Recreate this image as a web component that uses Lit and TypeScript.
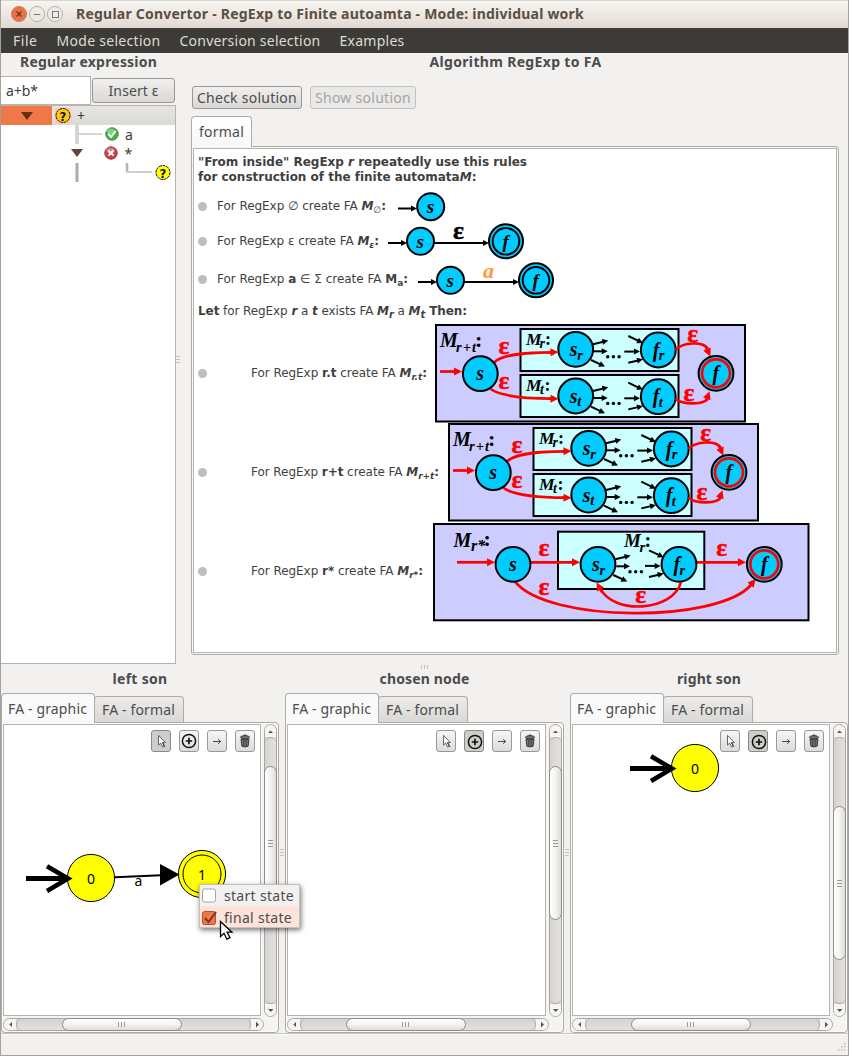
import { LitElement, html, svg, css } from "lit";
import { customElement, property } from "lit/decorators.js";

/** Text label that tracks its letters out or in to occupy a given width. */
@customElement("ui-label")
class UiLabel extends LitElement {
  @property({ type: Number }) w = 0;
  static styles = css`
    :host { display: inline-block; white-space: nowrap; }
  `;
  firstUpdated() {
    if (!this.w) return;
    const range = document.createRange();
    range.selectNodeContents(this);
    const natural = range.getBoundingClientRect().width;
    const count = (this.textContent || "").replace(/\s+/g, " ").trim().length;
    if (count > 1) this.style.letterSpacing = `${(this.w - natural) / count}px`;
  }
  render() {
    return html`<slot></slot>`;
  }
}

const RED = "#ff0000";
const BLUE = "#00ccff";

function arrow(x1: number, y1: number, x2: number, y2: number, color = "#000", width = 2, head = 6) {
  const len = Math.hypot(x2 - x1, y2 - y1);
  const ux = (x2 - x1) / len;
  const uy = (y2 - y1) / len;
  const bx = x2 - ux * head;
  const by = y2 - uy * head;
  const h = head * 0.5;
  return svg`<line x1=${x1} y1=${y1} x2=${bx + ux} y2=${by + uy} stroke=${color} stroke-width=${width} />
    <polygon points="${x2},${y2} ${bx - uy * h},${by + ux * h} ${bx + uy * h},${by - ux * h}" fill=${color} />`;
}

function node(x: number, y: number, r: number, label: string, sub = "", size = 20) {
  const dx = label === "f" ? 1 : 0;
  return svg`<circle cx=${x} cy=${y} r=${r} fill=${BLUE} stroke="#000" stroke-width="2" />
    <text class="m" x=${sub ? x - 6 + dx * 0.5 : x - 4 + dx * 0.6} y=${y + 6.7} font-size=${size}>${label}</text>
    ${sub ? svg`<text class="m" x=${x + 1.5 - dx} y=${y + 10.4} font-size="14.5">${sub}</text>` : ""}`;
}

const eps = (x: number, y: number, color = RED) =>
  svg`<text class="e" x=${x} y=${y + 6} font-size="25.5" fill=${color} stroke=${color} stroke-width="0.5">ε</text>`;

function dots(x: number, y: number) {
  return [0, 5.7, 11.4].map((d) => svg`<circle cx=${x + d} cy=${y} r="1.7" />`);
}

/** Inner machine: two states joined through an unspecified body. */
function machine(sx: number, sy: number, fx: number, fy: number, sub: string) {
  return svg`${node(sx, sy, 17.4, "s", sub)}${node(fx, fy, 17.4, "f", sub)}
    ${arrow(sx + 17.3, sy - 5, sx + 32.6, sy - 8.8)}
    ${arrow(sx + 18.3, sy + 2, sx + 32, sy + 2)}
    ${arrow(sx + 15.3, sy + 10.7, sx + 29.3, sy + 17.3)}
    ${arrow(fx - 30, fy - 14, fx - 15.3, fy - 7)}
    ${arrow(fx - 34, fy + 1.6, fx - 18.3, fy + 1.6)}
    ${arrow(fx - 30, fy + 12.7, fx - 15.3, fy + 9.3)}
    ${dots(sx + 32, sy + 7.4)}`;
}

const emptyFa = () => svg`
  ${arrow(1, 18.5, 20, 18.5)}
  ${node(33.7, 16.7, 13.5, "s", "", 19)}`;

const stepFa = (label: unknown) => svg`
  ${arrow(1, 21, 20, 21)}
  ${node(33.5, 19.3, 13.5, "s", "", 19)}
  ${arrow(47, 21, 102, 21)}
  <circle cx="119" cy="19.3" r="17" fill=${BLUE} stroke="#000" stroke-width="2" />
  ${node(119, 19.3, 13.3, "f", "", 19)}
  ${label}`;

const finalNode = (x: number, y: number) => svg`
  ${node(x, y, 17.4, "f")}
  <circle cx=${x} cy=${y} r="14" fill="none" stroke=${RED} stroke-width="2.7" />`;

const parallelFa = () => svg`
  <rect x="1" y="1" width="309" height="96.5" fill="#ccccff" stroke="#000" stroke-width="2" />
  <rect x="85.5" y="5" width="158" height="42" fill="#ccffff" stroke="#000" stroke-width="2" />
  <rect x="85.5" y="51" width="158" height="42" fill="#ccffff" stroke="#000" stroke-width="2" />
  <text class="t" x="5" y="23.3" font-size="20">M</text>
  <text class="t" x="21" y="28" font-size="14.5" textLength="20">r+t</text>
  <text class="t n" x="40" y="23.3" font-size="22">:</text>
  <text class="t" x="91" y="20.5" font-size="17.5">M</text>
  <text class="t" x="104.500" y="24" font-size="14">r</text>
  <text class="t n" x="110" y="20.5" font-size="18">:</text>
  <text class="t" x="91" y="66.5" font-size="17.5">M</text>
  <text class="t" x="105" y="70" font-size="14">t</text>
  <text class="t n" x="109.500" y="66.5" font-size="18">:</text>
  ${machine(140.7, 25.3, 223.3, 26, "r")}
  ${machine(140.7, 72, 223.3, 72.7, "t")}
  ${arrow(5, 47.5, 27, 47.5, RED, 2.7, 8)}
  <path class="r" d="M59 38.5 C68 29.5 95 28.5 117 28.3" />
  ${arrow(114, 28.4, 123.5, 28, RED, 2.7, 8)}
  <path class="r" d="M55.7 65 C66 72.5 95 74.5 117 74.7" />
  ${arrow(114, 74.6, 123.5, 74.8, RED, 2.7, 8)}
  <path class="r" d="M240.3 26 C248 18 268 17 273 25" />
  ${arrow(271, 23, 275.3, 32.5, RED, 2.7, 8)}
  <path class="r" d="M240.3 74.7 C248 81 270 81 273 74" />
  ${arrow(271, 77, 274.5, 67.3, RED, 2.7, 8)}
  ${node(45.3, 49.7, 17.4, "s")}${finalNode(281, 49.3)}
  ${eps(69, 24)}${eps(69, 59.3)}${eps(257.7, 12.3)}${eps(254, 70.7)}`;

const starFa = () => svg`
  <rect x="1" y="2" width="374.5" height="96.3" fill="#ccccff" stroke="#000" stroke-width="2" />
  <rect x="125" y="9.7" width="146.3" height="57.3" fill="#ccffff" stroke="#000" stroke-width="2" />
  <text class="t" x="20.5" y="24.7" font-size="20">M</text>
  <text class="t" x="38" y="29" font-size="16">r*</text>
  <text class="t n" x="50.5" y="24.3" font-size="22">:</text>
  <text class="t" x="191" y="25" font-size="19">M</text>
  <text class="t" x="206.5" y="29.5" font-size="15">r</text>
  <text class="t n" x="211.5" y="25" font-size="20">:</text>
  ${machine(165, 42.3, 246, 42.3, "r")}
  ${arrow(24, 40.3, 62, 40.3, RED, 2.7, 8)}
  ${arrow(98, 40.3, 147, 40.3, RED, 2.7, 8)}
  ${arrow(264, 40.3, 313, 40.3, RED, 2.7, 8)}
  <path class="r" d="M248 60 C240 90 180 93 167 66" />
  ${arrow(169, 70, 163.5, 60.5, RED, 2.7, 8)}
  <path class="r" d="M82 59.7 C115 101 285 101 318 63" />
  ${arrow(316, 65, 322.7, 57, RED, 2.7, 8)}
  ${node(80, 42.3, 17.4, "s")}${finalNode(331.3, 42.3)}
  ${eps(111, 28.3)}${eps(288.7, 28.3)}${eps(111, 67)}${eps(207.7, 75.3)}`;

const pointerIcon = () => html`<svg width="18" height="20" viewBox="0 0 18 20">
  <path d="M6.5 4.3v9.8l2.2-2 1.9 4 1.6-.8-1.9-3.8h3z" fill="#fff" stroke="#555" stroke-width="0.9" />
  <path d="M10.7 11.8l2.2 4" stroke="#333" stroke-width="1" fill="none" /></svg>`;
const addIcon = (d: number) => html`<svg width="18" height="20" viewBox="0 0 18 20">
  <circle cx=${9 + d} cy=${10 + d} r="6.6" fill="none" stroke="#111" stroke-width="1.5" />
  <path d=${`M${5.8 + d} ${10 + d}h6.4M${9 + d} ${6.8 + d}v6.4`} stroke="#111" stroke-width="1.7" /></svg>`;
const edgeIcon = () => html`<svg width="18" height="20" viewBox="0 0 18 20">
  <path d="M5 10.5h7.5M10.2 8.2l2.4 2.3-2.4 2.3" fill="none" stroke="#333" stroke-width="0.9" /></svg>`;
const trashIcon = () => html`<svg width="18" height="20" viewBox="0 0 18 20">
  <ellipse cx="9" cy="6.3" rx="4.6" ry="1.6" fill="#777" stroke="#333" stroke-width="1" />
  <path d="M5 8.2l.9 7q3 1.6 6.2 0l.9-7q-4 1.4-8 0z" fill="#8a8a8a" stroke="#333" stroke-width="1" />
  <path d="M7.3 9v6M9 9.2v6.2M10.8 9v6M7.5 4.4q1.5-1 3 0" fill="none" stroke="#333" stroke-width=".9" /></svg>`;

const questionIcon = (fill: string) => html`<svg width="16" height="16" viewBox="0 0 16 16">
  <circle cx="8" cy="7.5" r="7" fill=${fill} stroke="#111" stroke-width="1" stroke-dasharray="3 .6" />
  <text class="q" x="8" y="12.500" text-anchor="middle">?</text></svg>`;

/** Notebook with a drawing canvas, toolbar and two scrollbars. */
@customElement("fa-pane")
class FaPane extends LitElement {
  @property() heading = "";
  @property({ type: Number }) headingWidth = 0;
  @property() tool = "add";
  @property() graph = "";
  @property({ type: Number }) thumb = 28;

  static styles = css`
    :host { display: flex; flex-direction: column; width: 278px; flex: none; font-size: 14px; color: #4c4c4c; }
    .heading { height: 22px; font-weight: bold; text-align: center; line-height: 17px; }
    .tabs { display: flex; align-items: flex-end; height: 30px; }
    .tab { box-sizing: border-box; border: 1px solid #aeaba7; border-bottom: 0; border-radius: 4px 4px 0 0;
      padding-left: 7px; line-height: 26px; height: 26px; width: 90px; margin-left: -1px;
      background: linear-gradient(#edecea, #dad8d6); }
    .tab.on { height: 30px; width: 94px; line-height: 29px; margin: 0 0 -1px; background: #fafafa; position: relative; padding-left: 6px; }
    .box { box-sizing: border-box; height: 311px; border: 1px solid #aeaba7; border-radius: 0 4px 4px 4px;
      background: #f5f4f3; padding: 1px; display: grid; grid-template-columns: 1fr 13px;
      grid-template-rows: 294px 13px; box-shadow: inset 0 0 0 1px #fbfbfa; }
    .canvas { box-sizing: border-box; margin-right: 3px; height: 292px; border: 1px solid #b7b4af; background: #fff;
      display: grid; grid-template-columns: 100%; overflow: hidden; }
    .canvas > * { grid-area: 1 / 1; }
    .tools { display: flex; gap: 8px; justify-self: end; padding: 5px 5px 0 0; height: 22px; }
    .tool { box-sizing: border-box; width: 20px; height: 22px; border: 1px solid #999; border-radius: 3px;
      background: linear-gradient(#f6f6f5, #dcdbda); display: flex; }
    .tool.on { background: #cfcdcb; border-color: #8c8985; }
    .graph { font-family: "Noto Sans", sans-serif; font-size: 14px; fill: #000; display: block; }
    .v, .h { box-sizing: border-box; border: 1px solid #aaa6a2; border-radius: 7px; display: flex; }
    .v { width: 13px; height: 293px; flex-direction: column; background: linear-gradient(90deg, #d6d4d2, #e3e1df); }
    .h { height: 13px; background: linear-gradient(#d6d4d2, #e3e1df); }
    .end { background: #f6f5f4; display: flex; align-items: center; justify-content: center; flex: none; color: #555; }
    .v .end { height: 12px; width: 11px; }
    .h .end { width: 12px; height: 11px; }
    .v .end:first-child { border-radius: 6px 6px 0 0; }
    .v .end:last-child { border-radius: 0 0 6px 6px; }
    .h .end:first-child { border-radius: 6px 0 0 6px; }
    .h .end:last-child { border-radius: 0 6px 6px 0; }
    .track { flex: 1; display: flex; box-sizing: border-box; }
    .v .track { flex-direction: column; border: solid #aaa6a2; border-width: 1px 0; border-radius: 6px; }
    .h .track { border: solid #aaa6a2; border-width: 0 1px; border-radius: 6px; }
    .thumb { box-sizing: border-box; border: 1px solid #8f8b87; border-radius: 7px; display: flex; flex: none;
      align-items: center; justify-content: center; }
    .v .thumb { width: 13px; height: 154px; margin-left: -1px; background: linear-gradient(90deg, #fff, #f4f3f2 50%, #dedcda); }
    .h .thumb { width: 120px; height: 13px; margin: -1px 0 0 45px; background: linear-gradient(#fff, #f4f3f2 50%, #dedcda); }
  `;

  private state(x: number, y: number, label: string, final = false) {
    return svg`<circle cx=${x} cy=${y} r="23.6" fill="#ffff00" stroke="#000" stroke-width="1" />
      ${final ? svg`<circle cx=${x} cy=${y} r="19" fill="none" stroke="#000" stroke-width="1" />` : ""}
      <text x=${x} y=${y + 6} text-anchor="middle">${label}</text>`;
  }
  private start(x: number, y: number) {
    return svg`<path d="M${x - 65} ${y}h42" stroke="#000" stroke-width="5" />
      <path d="M${x - 44} ${y - 12.3}L${x - 23} ${y}L${x - 44} ${y + 12.3}" stroke="#000" stroke-width="4.6" fill="none" />`;
  }
  private drawing() {
    if (this.graph === "edge")
      return svg`${this.state(87, 153, "0")}${this.state(198, 149, "1", true)}
        ${this.start(87, 153.6)}
        <path d="M111 152.3L157 150.3" stroke="#000" stroke-width="2" />
        <polygon points="156,139 175.5,149.6 156,160.6" />
        <text x="134.5" y="161.3" text-anchor="middle">a</text>`;
    if (this.graph === "single") return svg`${this.state(122, 43, "0")}${this.start(122, 43.6)}`;
    return "";
  }
  private end(d: string) {
    return html`<div class="end"><svg width="7" height="7" viewBox="0 0 7 7"><path d=${d} fill="currentColor" /></svg></div>`;
  }
  render() {
    const on = (t: string) => (this.tool === t ? "tool on" : "tool");
    return html`
      <div class="heading"><ui-label w=${this.headingWidth}>${this.heading}</ui-label></div>
      <div class="tabs">
        <div class="tab on"><ui-label w="79">FA - graphic</ui-label></div>
        <div class="tab"><ui-label w="73">FA - formal</ui-label></div>
      </div>
      <div class="box">
        <div class="canvas">
          <svg class="graph" width="256" height="290">${this.drawing()}</svg>
          <div class="tools">
            <div class=${on("select")}>${pointerIcon()}</div>
            <div class=${on("add")}>${addIcon(this.tool === "add" ? 1 : 0)}</div>
            <div class="tool">${edgeIcon()}</div>
            <div class="tool">${trashIcon()}</div>
          </div>
        </div>
        <div class="v">
          ${this.end("M1 5h5L3.5 2.5z")}
          <div class="track"><div class="thumb" style="margin-top:${this.thumb}px">
            <svg width="5" height="8"><path d="M0 1.5h5M0 4.5h5M0 7.5h5" stroke="#999" /></svg></div></div>
          ${this.end("M1 2h5.5L3.7 5z")}
        </div>
        <div class="h">
          ${this.end("M5 1v5L2.3 3.5z")}
          <div class="track"><div class="thumb">
            <svg width="8" height="5"><path d="M.5 0v5M3.5 0v5M6.5 0v5" stroke="#999" /></svg></div></div>
          ${this.end("M2 .8v5.6L5 3.6z")}
        </div>
      </div>`;
  }
}

@customElement("app-root")
class AppRoot extends LitElement {
  static styles = css`
    :host { display: block; }
    .window { box-sizing: border-box; width: 849px; height: 1056px; display: flex; flex-direction: column;
      background: #f2f1f0; color: #4c4c4c; font: 14px/18px "Noto Sans", sans-serif; overflow: hidden; position: relative;
      border: solid #a5a099; border-width: 0 1px 1px; }
    .title { flex: none; height: 28px; display: flex; align-items: center; gap: 2px; padding-left: 10px; box-sizing: border-box;
      background: linear-gradient(#b9b2aa 0, #f8f6f2 1px, #ede8e2 50%, #e1d9d0); color: #594f46; font-weight: bold; font-size: 14px; }
    .title ui-label { margin-left: 11px; }
    .wbtn { width: 16px; height: 16px; }
    .menu { flex: none; height: 25px; background: #3c3b37; color: #dfdbd2; display: flex; align-items: center; padding-left: 12px; }
    .menu ui-label { margin-right: 19px; }
    .main { height: 611px; flex: none; display: flex; }
    .left { width: 175px; display: flex; flex-direction: column; }
    .left .head { height: 23px; text-align: center; font-weight: bold; }
    .entry { display: flex; height: 29px; gap: 1px; }
    .field { box-sizing: border-box; width: 90px; height: 29px; border: 1px solid #b7b4af; border-left: 0; background: #fff;
      padding-left: 5px; line-height: 27px; color: #3c3c3c; }
    .btn { box-sizing: border-box; border: 1px solid #9b9894; border-radius: 3px; background: linear-gradient(#f1f0ef, #d9d8d7);
      text-align: center; height: 23px; line-height: 21px; }
    .btn.insert { width: 83px; height: 25px; line-height: 24px; margin-top: 2px; }
    .btn.check { width: 110px; }
    .btn.show { width: 106px; color: #a6a4a2; background: #eae9e8; border-color: #c4c2bf; }
    .tree { box-sizing: border-box; flex: 1; background: #fff; border: solid #b7b4af; border-width: 1px 1px 1px 0; color: #3c3c3c; }
    .row { display: flex; height: 19px; align-items: center; box-sizing: border-box; }
    .row svg { flex: none; }
    .row.sel { background: linear-gradient(#e6e5e2, #dcdad7); }
    .mark { width: 51px; align-self: stretch; background: #f07746; color: #6b2c12; display: flex; align-items: center; justify-content: center; }
    .glow { background: #ffc9b3; display: flex; margin: 0 7px 0 3px; width: 16px; height: 16px; }
    .row.sel span { margin-left: -1px; }
    .q { font: bold 13px "DejaVu Sans Condensed", "DejaVu Sans", sans-serif; fill: #111; }
    .right { flex: 1; display: flex; flex-direction: column; padding: 0 8px; }
    .right .head { text-align: center; height: 33px; font-weight: bold; }
    .buttons { display: flex; gap: 8px; height: 30px; padding-left: 1px; }
    .tab { box-sizing: border-box; width: 61px; height: 31px; margin-bottom: -1px; position: relative; z-index: 1; border: 1px solid #aeaba7; border-bottom: 0;
      border-radius: 4px 4px 0 0; background: linear-gradient(#fff, #f7f7f6); text-align: center; line-height: 29px; }
    .panel { box-sizing: border-box; height: 509px; width: 648px; border: 1px solid #aeaba7; border-radius: 0 3px 3px 3px; padding: 1px; background: #f6f5f4; }
    .page { box-sizing: border-box; height: 505px; border: 1px solid #b7b4af; background: #fff; padding: 6px 0 0 4px;
      font: 12px/15px "DejaVu Sans", sans-serif; color: #3f3f3f; }
    .lead { font-weight: bold; display: flex; flex-direction: column; height: 35px; align-items: flex-start; }
    .rule { display: flex; align-items: center; height: 99px; }
    .rule.r1 { height: 32px; } .rule.r2 { height: 38px; } .rule.r3 { height: 39px; }
    .rule::before { content: ""; width: 9px; height: 9px; border-radius: 5px; background: #bebebe; margin-right: 10px; flex: none; }
    .rule.deep::before { margin-right: 44px; }
    .rule svg { flex: none; display: block; overflow: visible; }
    .rule ui-label { flex: none; line-height: 15px; }
    .rule sub, .let sub { font-size: 9px; vertical-align: -3px; line-height: 0; }
    .let sub { font-size: 10px; }
    .t0 { width: 180px; } .t1 { width: 170px; } .t2 { width: 200px; } .t3 { width: 184px; } .t4 { width: 197px; } .t5 { width: 182px; }
    .let { height: 25px; padding-top: 5px; box-sizing: border-box; }
    .m, .t { font-family: "Liberation Serif", serif; font-weight: bold; font-style: italic; }
    .n { font-style: normal; }
    .e { font-family: "Liberation Serif", serif; font-weight: bold; text-anchor: middle; }
    .r { fill: none; stroke: #f00; stroke-width: 2.7; }
    .grip-h { height: 6px; flex: none; display: flex; justify-content: center; }
    .panes { display: flex; height: 363px; flex: none; }
    .panes .mid { width: 279px; }
    .gap { width: 6px; display: flex; align-items: center; justify-content: center; }
    .status { flex: 1; border-top: 1px solid #c8c5c1; box-shadow: inset 0 1px #fafafa; display: flex; justify-content: flex-end; align-items: flex-end; }
    .popup { position: absolute; left: 198px; top: 884px; width: 101px; height: 44px; background: #f2f1f0; box-shadow: 1px 2px 5px rgba(0,0,0,.55); outline: 1px solid #c5c2be; outline-offset: -1px; }
    .item { height: 22px; display: flex; align-items: center; gap: 7px; padding: 2px 0 0 2px; box-sizing: border-box; }
    .item.hot { background: #fde3d9; }
    .cursor { position: absolute; left: 217px; top: 920px; }
    .vgrip { width: 7px; display: flex; align-items: center; }
  `;

  render() {
    const vgrip = html`<svg width="5" height="8"><path d="M0 1.5h4M0 4.5h4M0 7.5h4" stroke="#c3c1be" /></svg>`;
    return html`<div class="window">
      <div class="title">
        <svg class="wbtn" viewBox="0 0 16 16"><circle cx="8" cy="8" r="7.6" fill="#ee6f43" stroke="#b98a76" /><path d="M5.5 5.5l5 5M10.5 5.5l-5 5" stroke="#6c301c" stroke-width="1.2" /></svg>
        <svg class="wbtn" viewBox="0 0 16 16"><circle cx="8" cy="8" r="7.6" fill="#eeeae6" stroke="#b8b2ab" /><path d="M4.7 8.500h6.6" stroke="#777" /></svg>
        <svg class="wbtn" viewBox="0 0 16 16"><circle cx="8" cy="8" r="7.6" fill="#eeeae6" stroke="#b8b2ab" /><rect x="5.500" y="5.500" width="6" height="6" fill="none" stroke="#777" /></svg>
        <ui-label w="508">Regular Convertor - RegExp to Finite autoamta - Mode: individual work</ui-label>
      </div>
      <div class="menu">
        <ui-label w="24.5">File</ui-label><ui-label w="104">Mode selection</ui-label><ui-label w="141">Conversion selection</ui-label><ui-label w="65">Examples</ui-label>
      </div>
      <div class="main">
        <div class="left">
          <div class="head"><ui-label w="137">Regular expression</ui-label></div>
          <div class="entry">
            <div class="field"><ui-label w="32">a+b*</ui-label></div>
            <div class="btn insert"><ui-label w="50">Insert ε</ui-label></div>
          </div>
          <div class="tree">
            <div class="row sel"><div class="mark"><svg width="12" height="8" viewBox="0 0 12 8"><path d="M0 0h12L6 8z" fill="currentColor" /></svg></div>
              <div class="glow">${questionIcon("#ffcc11")}</div><span>+</span></div>
            <div class="row">
              <svg width="124" height="19"><path d="M76 0v19" stroke="#d9d4d2" stroke-width="4" /><path d="M78 9h23" stroke="#d9d4d2" stroke-width="2" />
                <circle cx="111" cy="9" r="6.2" fill="#44b04a" stroke="#2c8a35" /><ellipse cx="110" cy="6.5" rx="4.2" ry="3" fill="#7fd07c" /><path d="M107.5 9l2.6 3 4.6-6" fill="none" stroke="#fff" stroke-width="2" /></svg>
              <span>a</span></div>
            <div class="row">
              <svg width="123.5" height="19"><path d="M70 5h12l-6 8z" fill="#5f4440" />
                <circle cx="110" cy="9" r="6.2" fill="#c8424a" stroke="#9c3238" /><ellipse cx="109.5" cy="6.5" rx="4.2" ry="3" fill="#d97a7c" /><path d="M107.5 6.5l5 5M112.5 6.5l-5 5" stroke="#fff" stroke-width="1.9" /></svg>
              <span>*</span></div>
            <div class="row">
              <svg width="153.5" height="19"><path d="M76 0v19" stroke="#b3aba8" stroke-width="3" /><path d="M126 0v9" stroke="#b9b2af" stroke-width="2.5" /><path d="M125 9h26" stroke="#d3cecc" stroke-width="2" /></svg>
              ${questionIcon("#ffff00")}</div>
          </div>
        </div>
        <div class="vgrip">${vgrip}</div>
        <div class="right">
          <div class="head"><ui-label w="172">Algorithm RegExp to FA</ui-label></div>
          <div class="buttons">
            <div class="btn check"><ui-label w="100">Check solution</ui-label></div>
            <div class="btn show"><ui-label w="96">Show solution</ui-label></div>
          </div>
          <div class="tab"><ui-label w="45">formal</ui-label></div>
          <div class="panel"><div class="page">
            <div class="lead">
              <ui-label w="329">"From inside" RegExp <i>r</i> repeatedly use this rules</ui-label>
              <ui-label w="278">for construction of the finite automata<i>M</i>:</ui-label>
            </div>
            <div class="rule r1"><div class="t0"><ui-label w="169">For RegExp ∅ create FA <b><i>M</i></b><sub>∅</sub><b>:</b></ui-label></div>
              <svg width="50" height="32">${emptyFa()}</svg></div>
            <div class="rule r2"><div class="t1"><ui-label w="162">For RegExp ε create FA <b><i>M<sub>ε</sub></i>:</b></ui-label></div>
              <svg width="140" height="38">${stepFa(eps(71.5, 11, "#000"))}</svg></div>
            <div class="rule r3"><div class="t2"><ui-label w="191">For RegExp <b>a</b> ∈ Σ create FA <b>M<sub>a</sub>:</b></ui-label></div>
              <svg width="140" height="38">${stepFa(svg`<text class="m" x="66" y="17" font-size="22" fill="#ff9933">a</text>`)}</svg></div>
            <div class="let"><ui-label w="269"><b>Let</b> for RegExp <b><i>r</i></b> a <b><i>t</i></b> exists FA <b><i>M<sub>r</sub></i></b> a <b><i>M<sub>t</sub></i> Then:</b></ui-label></div>
            <div class="rule deep"><div class="t3"><ui-label w="176">For RegExp <b>r.t</b> create FA <b><i>M<sub>r.t</sub></i>:</b></ui-label></div>
              <svg width="312" height="99">${parallelFa()}</svg></div>
            <div class="rule deep"><div class="t4"><ui-label w="188">For RegExp <b>r+t</b> create FA <b><i>M<sub>r+t</sub></i>:</b></ui-label></div>
              <svg width="312" height="99">${parallelFa()}</svg></div>
            <div class="rule deep"><div class="t5"><ui-label w="172">For RegExp <b>r*</b> create FA <b><i>M<sub>r*</sub></i>:</b></ui-label></div>
              <svg width="378" height="99">${starFa()}</svg></div>
          </div></div>
        </div>
      </div>
      <div class="grip-h"><svg width="8" height="6"><path d="M.5 1v4M3.5 1v4M6.5 1v4" stroke="#c3c1be" /></svg></div>
      <div class="panes">
        <fa-pane heading="left son" headingWidth="55" tool="select" graph="edge"></fa-pane>
        <div class="gap">${vgrip}</div>
        <fa-pane class="mid" heading="chosen node" headingWidth="90"></fa-pane>
        <div class="gap">${vgrip}</div>
        <fa-pane heading="right son" headingWidth="64" graph="single" thumb="68"></fa-pane>
      </div>
      <div class="status"><svg width="12" height="12"><g fill="#bdbab6">
        <rect x="8" y="0" width="1.5" height="1.5" /><rect x="5" y="3" width="1.5" height="1.5" /><rect x="8" y="3" width="1.5" height="1.5" />
        <rect x="2" y="6" width="1.5" height="1.5" /><rect x="5" y="6" width="1.5" height="1.5" /><rect x="8" y="6" width="1.5" height="1.5" /></g></svg></div>
      <div class="popup">
        <div class="item"><svg width="16" height="16"><rect x="1.5" y="1" width="13" height="13" rx="2" fill="#fff" stroke="#aaa6a2" /></svg><ui-label w="70">start state</ui-label></div>
        <div class="item hot"><svg width="16" height="16"><rect x="1.5" y="1.5" width="13" height="13" rx="2" fill="#f07746" stroke="#b0502c" /><path d="M4 8l3.5 4L15 2" fill="none" stroke="#6b3a2a" stroke-width="2" /></svg><ui-label w="68">final state</ui-label></div>
      </div>
      <svg class="cursor" width="16" height="22" viewBox="0 0 16 22"><path d="M2.5 1.5v15l3.500-3.200 2.800 5.900 3.200-1.500-2.900-5.500h4.800z" fill="#fff" stroke="#000" stroke-width="1.3" /></svg>
    </div>`;
  }
}
